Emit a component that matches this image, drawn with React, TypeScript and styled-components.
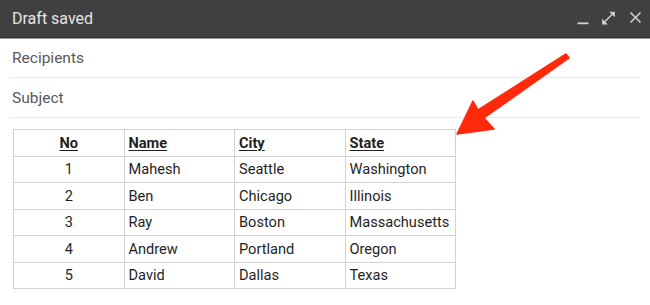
import styled, { createGlobalStyle } from "styled-components";

const GlobalStyle = createGlobalStyle`
  body {
    margin: 0;
    background: #ffffff;
    font-family: Roboto, "Liberation Sans", Arial, sans-serif;
  }
`

const Window = styled.div`
  position: relative;
  width: 650px;
  height: 305px;
  overflow: hidden;
  background: #ffffff;
`

const TitleBar = styled.div`
  height: 37px;
  display: flex;
  align-items: center;
  justify-content: space-between;
  padding: 0 5px 0 12px;
  background: #404040;
  border-bottom: 1px solid #2f2f2f;
  box-shadow: 0 1px 0 #9a9a9a;
`

const Title = styled.span`
  color: #e6e6e6;
  font-size: 16px;
`

const Controls = styled.div`
  display: flex;
  align-items: center;
`

const IconButton = styled.svg<{ $gap: number; $shift: number }>`
  display: block;
  fill: #cfcfcf;
  margin-left: ${props => props.$gap}px;
  transform: translateY(${props => props.$shift}px);
`

const Fields = styled.div`
  padding: 1px 10px 0;
`

const Field = styled.div<{ $height: number }>`
  height: ${props => props.$height}px;
  display: flex;
  align-items: center;
  padding-left: 2px;
  border-bottom: 1px solid #ebebeb;
  color: #585858;
  font-size: 15.5px;
`

const TableWrap = styled.div`
  padding: 11px 0 0 13px;
`

const Table = styled.table`
  width: 443px;
  border-collapse: collapse;
  table-layout: fixed;
  font-size: 14.6px;
  color: #1f1f1f;
`

const Cell = styled.td<{ $center?: boolean }>`
  height: 25.5px;
  padding: 0 0 0 4px;
  border: 1px solid #d2d2d2;
  text-align: ${props => (props.$center ? "center" : "left")};
  vertical-align: middle;
  ${props => props.$center && "padding: 0;"}
`

const HeadCell = styled(Cell).attrs({ as: "th" })`
  font-weight: 700;
  text-decoration: underline;
  text-underline-offset: 2px;
`

const Arrow = styled.svg`
  position: absolute;
  left: 0;
  top: 0;
  pointer-events: none;
`

const rows = [
    { no: 1, name: "Mahesh", city: "Seattle", state: "Washington" },
    { no: 2, name: "Ben", city: "Chicago", state: "Illinois" },
    { no: 3, name: "Ray", city: "Boston", state: "Massachusetts" },
    { no: 4, name: "Andrew", city: "Portland", state: "Oregon" },
    { no: 5, name: "David", city: "Dallas", state: "Texas" },
]

export default function App() {
    return (
        <>
            <GlobalStyle/>
            <Window>
                <TitleBar>
                    <Title>Draft saved</Title>
                    <Controls>
                        <IconButton $gap={0} $shift={-3} width="22" height="22" viewBox="0 0 24 24">
                            <path d="M6 19h12v2H6z"/>
                        </IconButton>
                        <IconButton $gap={6} $shift={-0.5} width="17" height="17" viewBox="0 0 24 24">
                            <path d="M21 11V3h-8l3.29 3.29-10 10L3 13v8h8l-3.29-3.29 10-10z"/>
                        </IconButton>
                        <IconButton $gap={9} $shift={-1} width="19" height="19" viewBox="0 0 24 24">
                            <path d="M19 6.41 17.59 5 12 10.59 6.41 5 5 6.41 10.59 12 5 17.59 6.41 19 12 13.41 17.59 19 19 17.59 13.41 12z"/>
                        </IconButton>
                    </Controls>
                </TitleBar>
                <Fields>
                    <Field $height={38}>Recipients</Field>
                    <Field $height={39}>Subject</Field>
                </Fields>
                <TableWrap>
                    <Table>
                        <thead>
                            <tr>
                                <HeadCell $center>No</HeadCell>
                                <HeadCell>Name</HeadCell>
                                <HeadCell>City</HeadCell>
                                <HeadCell>State</HeadCell>
                            </tr>
                        </thead>
                        <tbody>
                            {rows.map(row => (
                                <tr key={row.no}>
                                    <Cell $center>{row.no}</Cell>
                                    <Cell>{row.name}</Cell>
                                    <Cell>{row.city}</Cell>
                                    <Cell>{row.state}</Cell>
                                </tr>
                            ))}
                        </tbody>
                    </Table>
                </TableWrap>
                <Arrow width="650" height="305" viewBox="0 0 650 305">
                    <polygon
                        points="566,54 478,110 473,101 457,134 494,129 484,118 569,58"
                        fill="#ff2a0a"
                        stroke="#ff2a0a"
                        strokeWidth="1.5"
                        strokeLinejoin="round"
                    />
                </Arrow>
            </Window>
        </>
    );
}
